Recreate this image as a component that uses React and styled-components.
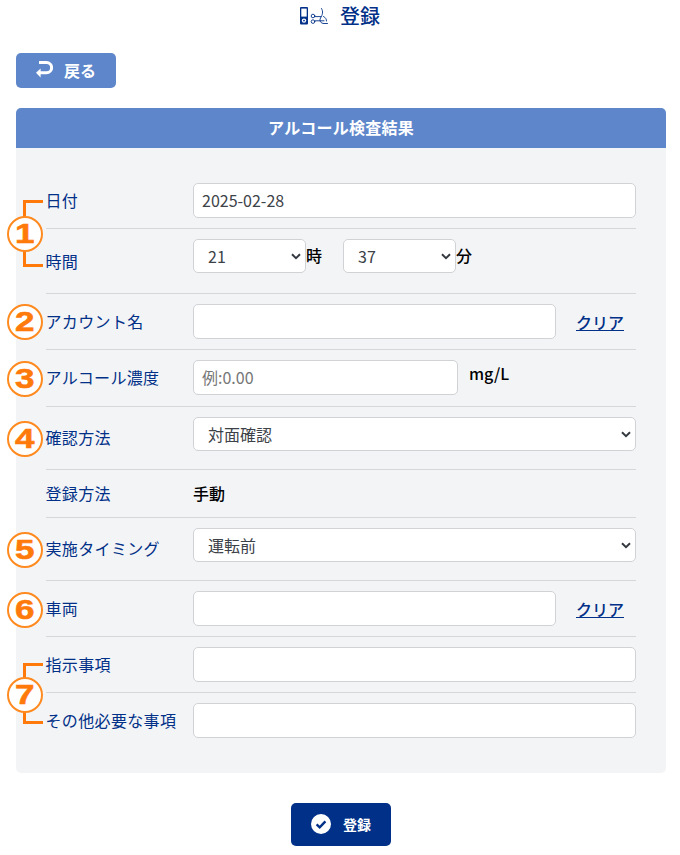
import React from "react";
import styled, { createGlobalStyle } from "styled-components";

const GlobalStyle = createGlobalStyle`
  html, body { margin: 0; padding: 0; background: #fff; }
  body {
    font-family: "Noto Sans CJK JP", "Noto Sans", sans-serif;
    font-size: 16px;
    color: #000;
  }
  * { box-sizing: border-box; }
`;

const NAVY = "#003087";
const BLUE = "#5e86cb";
const ORANGE = "#ff7a0a";
const CHEVRON =
  "data:image/svg+xml,%3Csvg xmlns='http://www.w3.org/2000/svg' width='10' height='7' viewBox='0 0 10 7'%3E%3Cpath d='M1 1.3 L5 5.2 L9 1.3' fill='none' stroke='%23343a40' stroke-width='2'/%3E%3C/svg%3E";

const Page = styled.div`
  position: relative;
  width: 680px;
  height: 855px;
  overflow: hidden;
`;

const Title = styled.h1`
  display: flex;
  justify-content: center;
  align-items: center;
  gap: 12px;
  height: 32px;
  margin: 0 0 21px;
  padding-bottom: 1px;
  font-size: 20px;
  font-weight: 500;
  color: ${NAVY};
`;

const BackButton = styled.button`
  display: flex;
  align-items: center;
  justify-content: center;
  gap: 11px;
  width: 100px;
  height: 35px;
  margin: 0 0 20px 16px;
  padding: 0 0 2px;
  border: 0;
  border-radius: 5px;
  background: ${BLUE};
  color: #fff;
  font: 700 16px "Noto Sans CJK JP", sans-serif;
`;

const Panel = styled.section`
  width: 650px;
  margin-left: 16px;
  border-radius: 5px;
  overflow: hidden;
  background: #f3f4f6;
`;

const PanelHeader = styled.h2`
  height: 40px;
  margin: 0;
  background: ${BLUE};
  color: #fff;
  font-size: 16px;
  font-weight: 700;
  letter-spacing: 0.25px;
  line-height: 38px;
  text-align: center;
`;

const Form = styled.div`
  padding: 35px 30px;
`;

const Row = styled.div`
  display: grid;
  grid-template-columns: 147px 1fr;
  align-items: start;
  height: ${(p) => p.$height}px;
  padding-top: ${(p) => p.$top ?? 10}px;
  border-bottom: ${(p) => (p.$last ? "0" : "1px solid #d5d7da")};
`;

const Label = styled.label`
  display: flex;
  align-items: center;
  height: ${(p) => p.$boxHeight || 35}px;
  margin-left: -0.5px;
  font-size: 16px;
  letter-spacing: 0.35px;
  color: ${NAVY};
  transform: translateY(${(p) => (p.$shift || 0) - 1}px);
`;

const Controls = styled.div`
  display: flex;
  align-items: ${(p) => p.$align || "center"};
`;

const TextInput = styled.input`
  width: ${(p) => p.$width || 443}px;
  height: 35px;
  padding: 0 8px 1px;
  border: 1px solid #d0d2d6;
  border-radius: 5px;
  background: #fff;
  font: 16px "Noto Sans CJK JP", sans-serif;
  color: #3c4248;
  &::placeholder { color: #777; opacity: 1; }
`;

const Select = styled.select`
  width: ${(p) => p.$width || 443}px;
  height: 34px;
  padding: 0 20px 1px 14px;
  border: 1px solid #d0d2d6;
  border-radius: 5px;
  appearance: none;
  background: #fff url("${CHEVRON}") no-repeat right 4px center;
  font: 16px "Noto Sans CJK JP", sans-serif;
  color: #3c4248;
`;

const Unit = styled.span`
  margin: 0 ${(p) => p.$gap || 0}px 0 ${(p) => p.$left || 0}px;
  font-size: 16px;
  font-weight: 500;
  transform: translateY(${(p) => p.$shift ?? -1}px);
`;

const ClearLink = styled.a`
  margin-left: 20px;
  color: ${NAVY};
  font-size: 16px;
  font-weight: 500;
  text-decoration: underline;
`;

const StaticValue = styled.span`
  display: flex;
  align-items: center;
  height: 45px;
  font-size: 16px;
  font-weight: 500;
`;

const SubmitWrap = styled.div`
  display: flex;
  justify-content: center;
  margin-top: 30px;
  padding-left: 2px;
`;

const SubmitButton = styled.button`
  display: flex;
  align-items: center;
  justify-content: center;
  gap: 12px;
  width: 100px;
  height: 43px;
  padding: 0 0 2px;
  border: 0;
  border-radius: 5px;
  background: ${NAVY};
  color: #fff;
  font: 700 14px "Noto Sans CJK JP", sans-serif;
`;

/* orange callouts lying over the form */
const Badge = styled.div`
  position: absolute;
  left: 7px;
  top: ${(p) => p.$top}px;
  display: flex;
  align-items: center;
  justify-content: center;
  width: 36px;
  height: 36px;
  border: 2px solid #ff8a1f;
  border-radius: 50%;
  background: #fff;
`;

const BadgeDigit = styled.span`
  display: block;
  font: 700 28px/1 "Liberation Sans", sans-serif;
  color: ${ORANGE};
  transform: scaleX(1.25);
  -webkit-text-stroke: 0.6px ${ORANGE};
`;

const Bracket = styled.div`
  position: absolute;
  left: 23px;
  top: ${(p) => p.$top}px;
  width: 20px;
  height: ${(p) => p.$height}px;
  border-left: 3px solid ${ORANGE};
  border-top: ${(p) => (p.$up ? `3px solid ${ORANGE}` : "0")};
  border-bottom: ${(p) => (p.$up ? "0" : `3px solid ${ORANGE}`)};
`;

const DeviceIcon = () => (
  <svg width="28" height="18" viewBox="0 0 28 18" fill="none">
    <rect x="0" y="0" width="8" height="17.5" rx="1" fill={NAVY} />
    <rect x="1.3" y="1.6" width="5.4" height="8" fill="#fff" />
    <circle cx="4" cy="13.6" r="2.2" fill="#fff" />
    <circle cx="4" cy="13.6" r="0.9" fill={NAVY} />
    <g stroke={NAVY} strokeWidth="0.9" strokeLinecap="round">
      <circle cx="13" cy="9" r="1.8" />
      <circle cx="13" cy="14.6" r="1.8" />
      <path d="M15 9.6 H21 M15 13.8 H24" />
      <path d="M21.5 1.5 C23.5 4.5 22.5 8 20.5 11 C19 14 21 16.5 24 16.5 H27.5" />
      <path d="M23.5 9.5 C25.5 10.5 26.5 12 26.5 14" />
    </g>
  </svg>
);

const BackIcon = () => (
  <svg width="17" height="18" viewBox="0 0 17 18" fill="none">
    <path d="M3 1.6 H10.5 A5.1 5.1 0 0 1 10.5 11.8 H3" stroke="#fff" strokeWidth="3" />
    <path d="M0 11.8 L4.6 7.6 V16.4 Z" fill="#fff" />
  </svg>
);

const CheckIcon = () => (
  <svg width="20" height="20" viewBox="0 0 20 20">
    <circle cx="10" cy="10" r="10" fill="#fff" />
    <path d="M5.6 10.3 L8.7 13.3 L14.4 7.3" fill="none" stroke={NAVY} strokeWidth="2.4" />
  </svg>
);

const hours = Array.from({ length: 24 }, (_, i) => String(i));
const minutes = Array.from({ length: 60 }, (_, i) => String(i));

const badges = [
  { n: "1", top: 216 },
  { n: "2", top: 304 },
  { n: "3", top: 361 },
  { n: "4", top: 421 },
  { n: "5", top: 532 },
  { n: "6", top: 592 },
  { n: "7", top: 677 },
];

const brackets = [
  { top: 200, height: 17, up: true },
  { top: 251, height: 16 },
  { top: 663, height: 15, up: true },
  { top: 711, height: 13 },
];

export default function App() {
  return (
    <Page>
      <GlobalStyle />
      <Title>
        <DeviceIcon />
        登録
      </Title>
      <BackButton>
        <BackIcon />
        戻る
      </BackButton>
      <Panel>
        <PanelHeader>アルコール検査結果</PanelHeader>
        <Form>
          <Row $height={46} $top={0}>
            <Label>日付</Label>
            <Controls>
              <TextInput defaultValue="2025-02-28" />
            </Controls>
          </Row>
          <Row $height={65}>
            <Label $shift={5}>時間</Label>
            <Controls>
              <Select $width={113} defaultValue="21">
                {hours.map((h) => (
                  <option key={h}>{h}</option>
                ))}
              </Select>
              <Unit $gap={21}>時</Unit>
              <Select $width={113} defaultValue="37">
                {minutes.map((m) => (
                  <option key={m}>{m}</option>
                ))}
              </Select>
              <Unit>分</Unit>
            </Controls>
          </Row>
          <Row $height={56}>
            <Label>アカウント名</Label>
            <Controls>
              <TextInput $width={363} />
              <ClearLink>クリア</ClearLink>
            </Controls>
          </Row>
          <Row $height={57}>
            <Label>アルコール濃度</Label>
            <Controls $align="flex-start">
              <TextInput $width={265} placeholder="例:0.00" />
              <Unit $left={11} $shift={1}>mg/L</Unit>
            </Controls>
          </Row>
          <Row $height={63}>
            <Label $shift={3}>確認方法</Label>
            <Controls>
              <Select defaultValue="対面確認">
                <option>対面確認</option>
              </Select>
            </Controls>
          </Row>
          <Row $height={48} $top={0}>
            <Label $boxHeight={47}>登録方法</Label>
            <StaticValue>手動</StaticValue>
          </Row>
          <Row $height={63}>
            <Label $shift={3}>実施タイミング</Label>
            <Controls>
              <Select defaultValue="運転前">
                <option>運転前</option>
              </Select>
            </Controls>
          </Row>
          <Row $height={56}>
            <Label>車両</Label>
            <Controls>
              <TextInput $width={363} />
              <ClearLink>クリア</ClearLink>
            </Controls>
          </Row>
          <Row $height={56}>
            <Label>指示事項</Label>
            <Controls>
              <TextInput />
            </Controls>
          </Row>
          <Row $height={45} $last>
            <Label>その他必要な事項</Label>
            <Controls>
              <TextInput />
            </Controls>
          </Row>
        </Form>
      </Panel>
      <SubmitWrap>
        <SubmitButton>
          <CheckIcon />
          登録
        </SubmitButton>
      </SubmitWrap>
      {brackets.map((b) => (
        <Bracket key={b.top} $top={b.top} $height={b.height} $up={b.up} />
      ))}
      {badges.map((b) => (
        <Badge key={b.n} $top={b.top}>
          <BadgeDigit>{b.n}</BadgeDigit>
        </Badge>
      ))}
    </Page>
  );
}
